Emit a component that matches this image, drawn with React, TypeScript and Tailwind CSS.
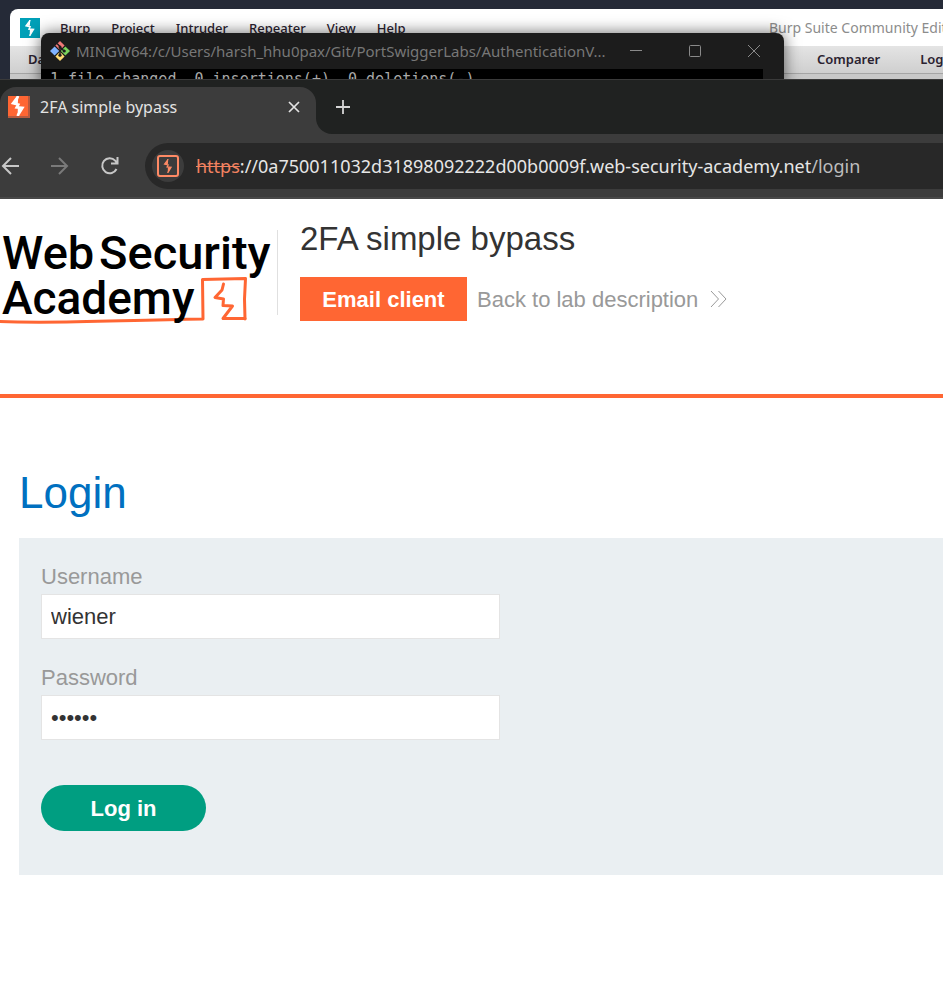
import React, { useState } from "react";

const SANS = "font-['Liberation_Sans',Arial,sans-serif]";
const UI = "font-['Noto_Sans','Open_Sans',sans-serif]";

function Bolt({ className, weight = 2 }: { className: string; weight?: number }) {
  return (
    <svg viewBox="0 0 22 22" className={className} fill="none" aria-hidden="true">
      <path
        d="M11 0 10.3 1.6 5.6 8 11.2 9.4 9.6 12.4 15.8 13 11.4 20.2 10.6 22"
        stroke="currentColor"
        strokeWidth={weight}
        strokeLinejoin="miter"
      />
      <path d="M11.4 0 10.8 8 6 8.2ZM10.6 22 10.8 13 15.6 13.2Z" fill="currentColor" />
    </svg>
  );
}

function GitIcon() {
  return (
    <svg viewBox="0 0 20 20" className="size-5 shrink-0" aria-hidden="true">
      <path d="M10 0 14.6 4.6 10 9.2 5.4 4.6Z" fill="#f07878" />
      <path d="M4.6 5.4 9.2 10 4.6 14.6 0 10Z" fill="#80b3ff" />
      <path d="M15.4 5.4 20 10 15.4 14.6 10.8 10Z" fill="#7ad35c" />
      <path d="M10 10.8 14.6 15.4 10 20 5.4 15.4Z" fill="#ffdc73" />
      <path d="M7 2.6 10 5.6V14.4M10 6 14 10" stroke="#1c1c1c" strokeWidth="1.4" fill="none" />
      <circle cx="10" cy="6" r="1.5" fill="#1c1c1c" />
      <circle cx="10" cy="14.2" r="1.6" fill="#1c1c1c" />
      <circle cx="14.2" cy="10" r="1.6" fill="#1c1c1c" />
    </svg>
  );
}

function BurpWindow() {
  const menus = ["Burp", "Project", "Intruder", "Repeater", "View", "Help"];
  return (
    <div className={`absolute top-[9px] right-0 left-[10px] h-20 overflow-hidden rounded-tl-lg bg-white text-[13px] font-medium text-[#2a2230] ${UI}`}>
      <div className="flex h-[37px] items-center pl-[10px]">
        <span className="flex size-5 shrink-0 items-center justify-center bg-[#00a0b8] text-white">
          <Bolt className="size-4" />
        </span>
        <div className="flex grow gap-[21px] pl-5">
          {menus.map((m) => (
            <button key={m} className="leading-5">{m}</button>
          ))}
        </div>
        <span className="w-[174px] shrink-0 overflow-hidden text-sm font-normal whitespace-nowrap text-[#8c8c8c]">
          Burp Suite Community Edition
        </span>
      </div>
      <div className="flex h-7 items-center justify-between border-b border-[#a5a5a5] bg-linear-to-b from-[#e4e4e4] to-[#cfcfcf] pl-[18px] font-semibold">
        <span>Dashboard</span>
        <span className="flex w-[126px] shrink-0 gap-10 overflow-hidden whitespace-nowrap">
          <span>Comparer</span>
          <span>Logger</span>
        </span>
      </div>
      <div className="h-4 bg-[#c8c8c8]" />
    </div>
  );
}

function TerminalWindow() {
  return (
    <div className="absolute top-[33px] left-[41px] h-14 w-[743px] overflow-hidden rounded-t-lg bg-[#1c1c1c] shadow-[0_0_16px_rgba(0,0,0,0.6)]">
      <div className={`flex h-9 items-center pr-[23px] pl-[9px] text-[#777] ${UI}`}>
        <GitIcon />
        <span className="grow pl-[6px] text-[15px] whitespace-nowrap">
          MINGW64:/c/Users/harsh_hhu0pax/Git/PortSwiggerLabs/AuthenticationV...
        </span>
        <div className="flex shrink-0 gap-[45px]">
          <button aria-label="Minimize">
            <svg viewBox="0 0 14 14" className="size-[14px]"><path d="M1 6.5H13" stroke="#8a8a8a" /></svg>
          </button>
          <button aria-label="Maximize">
            <svg viewBox="0 0 14 14" className="size-[14px]"><rect x="1.5" y="1.5" width="11" height="11" rx="1" fill="none" stroke="#8a8a8a" /></svg>
          </button>
          <button aria-label="Close">
            <svg viewBox="0 0 14 14" className="size-[14px]"><path d="M1 1 13 13M13 1 1 13" stroke="#8a8a8a" /></svg>
          </button>
        </div>
      </div>
      <pre className="mr-[21px] bg-black pl-[9px] font-['DejaVu_Sans_Mono','Liberation_Mono',monospace] text-[15px] leading-5 text-[#a9a9a9]">
        1 file changed, 0 insertions(+), 0 deletions(-)
      </pre>
    </div>
  );
}

function Browser() {
  return (
    <div className={`relative z-10 bg-[#202221] ${UI}`}>
      <div className="flex h-[55px] border-t border-[#3a3a3a] pt-[7px]">
        <div className="flex h-[47px] w-[316px] shrink-0 items-start rounded-t-2xl bg-[#3c3c3c] pt-[9px] pr-4 pl-2">
          <span className="flex size-[22px] shrink-0 items-center justify-center border-r-2 border-b-2 border-[#b85a3e] bg-[#ff6633] text-white">
            <Bolt className="size-5" weight={3} />
          </span>
          <span className="grow pl-[10px] text-base leading-[22px] text-[#e3e3e3]">2FA simple bypass</span>
          <button aria-label="Close tab" className="flex h-[22px] items-center">
            <svg viewBox="0 0 12 12" className="size-3"><path d="M1 1 11 11M11 1 1 11" stroke="#e3e3e3" strokeWidth="1.7" /></svg>
          </button>
        </div>
        <div className="grow bg-[#3c3c3c]">
          <div className="h-[47px] rounded-bl-2xl bg-[#202221] pt-[13px] pl-5">
            <button aria-label="New tab" className="block">
              <svg viewBox="0 0 14 14" className="size-[14px]"><path d="M7 0V14M0 7H14" stroke="#d5d5d5" strokeWidth="1.8" /></svg>
            </button>
          </div>
        </div>
      </div>
      <div className="flex h-[65px] items-center border-b-2 border-[#484848] bg-[#3c3c3c]">
        <div className="flex w-[145px] shrink-0 items-center gap-[30px]">
          <button aria-label="Back">
            <svg viewBox="0 0 20 20" className="size-5" fill="none" stroke="#c7c7c7" strokeWidth="2"><path d="M19 10H3M11 2 3 10 11 18" /></svg>
          </button>
          <button aria-label="Forward">
            <svg viewBox="0 0 20 20" className="size-5" fill="none" stroke="#7a7a7a" strokeWidth="2"><path d="M1 10H17M9 2 17 10 9 18" /></svg>
          </button>
          <button aria-label="Reload">
            <svg viewBox="0 0 20 20" className="size-5" fill="none" stroke="#c7c7c7" strokeWidth="2"><path d="M16.5 13A7.5 7.5 0 1 1 15.2 4.6L17 7M17.5 1V7.5H11" /></svg>
          </button>
        </div>
        <div className="flex h-[46px] grow items-center rounded-l-full bg-[#282828] pl-[7px]">
          <span className="flex size-8 shrink-0 items-center justify-center rounded-full bg-[#3c3c3c]">
            <span className="flex size-[22px] items-center justify-center rounded-[3px] border-2 border-[#ff8a65] text-[#ff8a65]">
              <Bolt className="size-[14px]" />
            </span>
          </span>
          <span className="pl-3 text-[18px] leading-6 whitespace-nowrap text-[#e6e6e6]">
            <span className="text-[#f28260] line-through">https</span>
            <span>://0a750011032d31898092222d00b0009f.web-security-academy.net</span>
            <span className="text-[#bdbdbd]">/login</span>
          </span>
        </div>
      </div>
    </div>
  );
}

function AcademyLogo() {
  return (
    <svg viewBox="0 0 272 100" className="h-[100px] w-[272px] shrink-0" role="img" aria-label="Web Security Academy">
      <g className="font-['Roboto',sans-serif] text-[47px] font-medium" fill="#000">
        <text x="2" y="42">Web</text>
        <text x="99" y="42">Security</text>
      </g>
      <g fill="none" stroke="#ff6633" strokeLinejoin="round" strokeLinecap="round">
        <path d="M0 94.5C60 97 120 93 203 92L202.5 52.5 245.5 51.5 244.5 72 245 92" strokeWidth="3" />
        <path d="M223.5 57 222 63 215 70.5 223.5 72 223 78.5 232.5 79 223 91.5 245 91.5" strokeWidth="3" />
      </g>
      <text x="2" y="87" fill="#000" className="font-['Roboto',sans-serif] text-[46px] font-medium">Academy</text>
    </svg>
  );
}

function Field({ id, label, type, initial }: { id: string; label: string; type: string; initial: string }) {
  const [value, setValue] = useState(initial);
  return (
    <div className="flex flex-col gap-[5px]">
      <label htmlFor={id} className="text-[22px] leading-[25px] text-[#999]">{label}</label>
      <input
        id={id}
        type={type}
        value={value}
        onChange={(e) => setValue(e.target.value)}
        className="h-[45px] w-full max-w-[459px] border border-[#e4e4e4] bg-white px-[9px] text-[22px] text-[#333]"
      />
    </div>
  );
}

export default function App() {
  return (
    <div className={`min-h-screen overflow-x-hidden bg-white ${SANS}`}>
      <div className="relative h-[79px] overflow-hidden bg-[#252a37]">
        <BurpWindow />
        <TerminalWindow />
      </div>
      <Browser />
      <header className="flex h-[199px] items-start border-b-4 border-[#ff6633] pt-5">
        <div className="flex items-start pt-2">
          <AcademyLogo />
        </div>
        <div className="mt-[11px] ml-[5px] h-[85px] border-l border-[#e0e0e0]" />
        <div className="pl-[22px]">
          <h2 className="text-[33px] leading-[40px] text-[#333]">2FA simple bypass</h2>
          <div className="mt-[18px] flex items-center gap-[10px] text-[22px]">
            <button className="h-11 w-[167px] bg-[#ff6633] font-bold text-white">Email client</button>
            <a href="#lab" className="flex items-center gap-3 text-[#999]">
              Back to lab description
              <svg viewBox="0 0 17 18" className="h-[18px] w-[17px]" fill="none" stroke="#999"><path d="M1 1 8.5 9 1 17M8.5 1 16 9 8.5 17" /></svg>
            </a>
          </div>
        </div>
      </header>
      <main className="pt-[70px] pl-[19px]">
        <h1 className="text-[44px] leading-[50px] text-[#0070c0]">Login</h1>
        <form
          className="mt-5 flex flex-col gap-[26px] bg-[#eaeff2] px-[22px] pt-[26px] pb-11"
          onSubmit={(e) => e.preventDefault()}
        >
          <Field id="username" label="Username" type="text" initial="wiener" />
          <Field id="password" label="Password" type="password" initial="secret" />
          <button type="submit" className="mt-[19px] h-[46px] w-[165px] rounded-full bg-[#009e81] text-[22px] font-bold text-white">
            Log in
          </button>
        </form>
      </main>
    </div>
  );
}
